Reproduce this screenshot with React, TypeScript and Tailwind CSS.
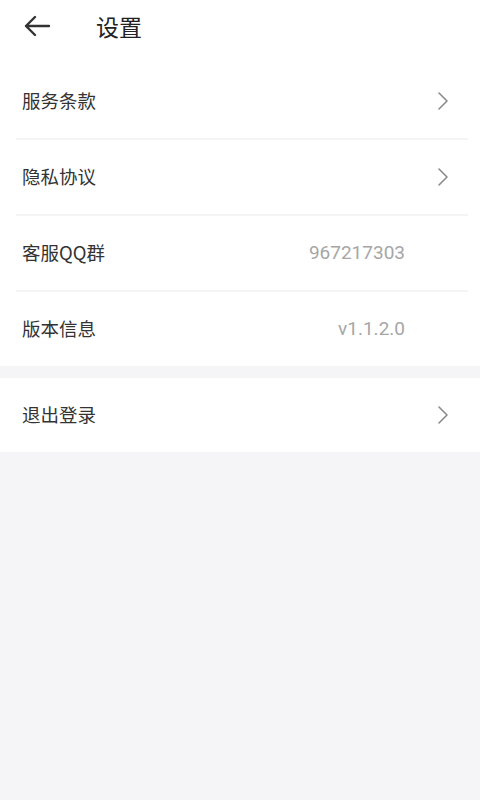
import React from "react";

const Chevron = () => (
  <svg width="12" height="20" viewBox="0 0 12 20" fill="none">
    <path d="M2 2l8 8-8 8" stroke="#8a8a8a" strokeWidth="1.6" strokeLinecap="round" strokeLinejoin="round" />
  </svg>
);

function Row({ label, value, arrow, divider }: { label: string; value?: string; arrow?: boolean; divider?: boolean }) {
  return (
    <div className={`ml-4 mr-3 flex items-center pl-[6px] pr-[19px] ${divider ? "h-[76px] border-b-2 border-[#f4f4f6]" : "h-[74px]"}`}>
      <span className="text-[18.5px] text-[#333333]">{label}</span>
      <div className="flex-1" />
      {value && (
        <span className="mr-[44px] text-[19px] text-[#a6a6a6]" style={{ fontFamily: "Roboto, sans-serif" }}>
          {value}
        </span>
      )}
      {arrow && <Chevron />}
    </div>
  );
}

export default function App() {
  return (
    <div className="flex h-[800px] w-[480px] flex-col bg-[#f5f5f7]" style={{ fontFamily: '"Noto Sans CJK SC", "Noto Sans", sans-serif' }}>
      <div className="bg-white">
        <div className="flex h-[52px] items-center">
          <svg className="ml-[23px]" width="28" height="24" viewBox="0 0 28 24" fill="none">
            <path d="M26 12H3M12 3l-9 9 9 9" stroke="#333333" strokeWidth="2.4" strokeLinecap="round" strokeLinejoin="round" />
          </svg>
          <span className="ml-[45px] text-[23px] text-[#222222]">设置</span>
        </div>
        <div className="h-[12px]" />
        <Row label="服务条款" arrow divider />
        <Row label="隐私协议" arrow divider />
        <Row label="客服QQ群" value="967217303" divider />
        <Row label="版本信息" value="v1.1.2.0" />
      </div>
      <div className="mt-[12px] bg-white">
        <Row label="退出登录" arrow />
      </div>
    </div>
  );
}
